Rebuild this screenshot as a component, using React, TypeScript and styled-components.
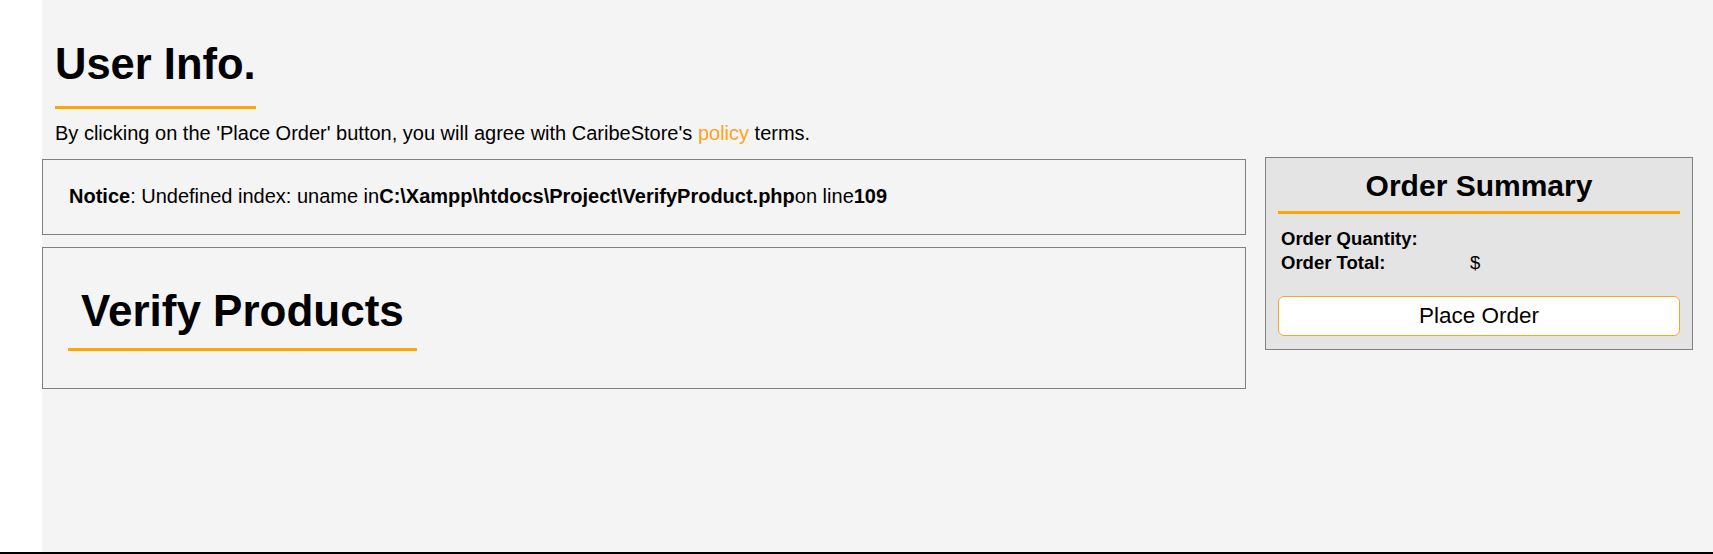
import React from "react";
import styled, { createGlobalStyle } from "styled-components";

const GlobalStyle = createGlobalStyle`
  html, body {
    margin: 0;
    padding: 0;
    background: #ffffff;
    font-family: "Liberation Sans", Arial, sans-serif;
    color: #000;
  }
  * { box-sizing: border-box; }
`;

const Page = styled.div`
  display: flex;
  flex-direction: column;
  width: 100%;
  height: 554px;
`;

const Body = styled.div`
  display: flex;
  flex: 1;
`;

const Sidebar = styled.aside`
  width: 42px;
  flex-shrink: 0;
  background: #ffffff;
`;

const Main = styled.main`
  flex: 1;
  background: #f4f4f4;
  display: flex;
  flex-direction: column;
`;

const Footer = styled.footer`
  height: 2px;
  background: #000;
`;

const Header = styled.header`
  padding: 39px 13px 0;
`;

const PageTitle = styled.h1`
  display: inline-block;
  margin: 0;
  font-size: 43.5px;
  line-height: 1.15;
  font-weight: 700;
  padding-bottom: 17px;
  border-bottom: 3px solid #ffa500;
`;

const Lead = styled.p`
  margin: 13px 0 0;
  font-size: 20px;
  line-height: 1.15;
`;

const Accent = styled.a`
  color: #ffa31a;
  text-decoration: none;
`;

const Content = styled.div`
  display: flex;
  align-items: flex-start;
  gap: 19px;
  padding-right: 20px;
  margin-top: 12px;
`;

const LeftColumn = styled.section`
  width: 1204px;
  display: flex;
  flex-direction: column;
  gap: 12px;
  margin-top: 2px;
`;

const Panel = styled.div`
  border: 1px solid #808080;
  background: #f4f4f4;
`;

const NoticePanel = styled(Panel)`
  padding: 25px 26px 26px;
  font-size: 20px;
  line-height: 1.15;
`;

const VerifyPanel = styled(Panel)`
  padding: 38px 25px 37px;
`;

const SectionTitle = styled.h2`
  display: inline-block;
  margin: 0;
  padding: 0 13px 11px;
  font-size: 44px;
  line-height: 1.15;
  font-weight: 700;
  border-bottom: 3px solid #ffa500;
`;

const Summary = styled.aside`
  width: 428px;
  background: #e4e4e4;
  border: 1px solid #808080;
  padding: 11px 12px 13px;
`;

const SummaryTitle = styled.h3`
  margin: 0;
  text-align: center;
  font-size: 30px;
  line-height: 1.15;
  font-weight: 700;
  padding-bottom: 7px;
  border-bottom: 3px solid #ffa500;
`;

const Totals = styled.dl`
  display: grid;
  grid-template-columns: 189px 1fr;
  margin: 13px 0 0;
  padding-left: 3px;
  font-size: 18.5px;
  line-height: 24px;
`;

const Term = styled.dt`
  font-weight: 700;
`;

const Value = styled.dd`
  margin: 0;
`;

const PlaceOrderButton = styled.button`
  display: block;
  width: 100%;
  height: 40px;
  margin-top: 21px;
  background: #ffffff;
  border: 1px solid #f7a824;
  border-radius: 6px;
  font-family: "Liberation Sans", Arial, sans-serif;
  font-size: 22.5px;
  color: #000;
  cursor: pointer;
`;

export default function App() {
  return (
    <>
      <GlobalStyle />
      <Page>
        <Body>
          <Sidebar />
          <Main>
            <Header>
              <PageTitle>User Info.</PageTitle>
              <Lead>
                By clicking on the 'Place Order' button, you will agree with CaribeStore's{" "}
                <Accent href="#">policy</Accent> terms.
              </Lead>
            </Header>
            <Content>
              <LeftColumn>
                <NoticePanel>
                  <b>Notice</b>: Undefined index: uname in<b>C:\Xampp\htdocs\Project\VerifyProduct.php</b>on line<b>109</b>
                </NoticePanel>
                <VerifyPanel>
                  <SectionTitle>Verify Products</SectionTitle>
                </VerifyPanel>
              </LeftColumn>
              <Summary>
                <SummaryTitle>Order Summary</SummaryTitle>
                <Totals>
                  <Term>Order Quantity:</Term>
                  <Value></Value>
                  <Term>Order Total:</Term>
                  <Value>$</Value>
                </Totals>
                <PlaceOrderButton>Place Order</PlaceOrderButton>
              </Summary>
            </Content>
          </Main>
        </Body>
        <Footer />
      </Page>
    </>
  );
}
